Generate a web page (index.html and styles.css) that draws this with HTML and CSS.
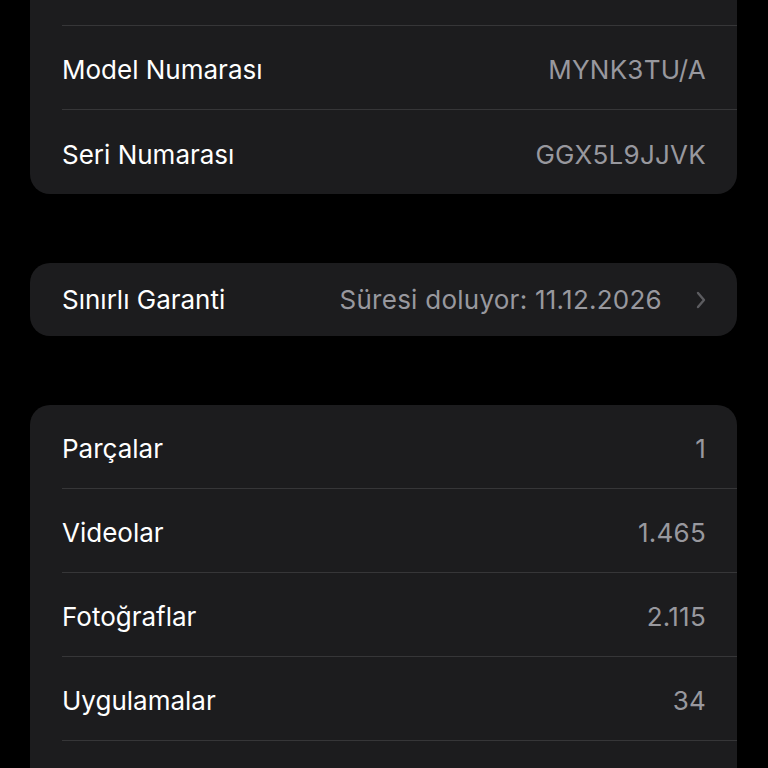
FILE: index.html
```html
<!DOCTYPE html>
<html lang="tr">
<head>
    <meta charset="UTF-8">
    <meta name="viewport" content="width=device-width, initial-scale=1.0">
    <title>Hakkında</title>
    <link rel="stylesheet" href="styles.css">
</head>
<body>
    <div class="screen">
        <div class="group group-first">
            <!-- row scrolled off the top, only its bottom edge shows -->
            <div class="row">
                <div class="row-inner"></div>
            </div>
            <div class="row">
                <div class="row-inner">
                    <span class="label">Model Numarası</span>
                    <span class="value">MYNK3TU/A</span>
                </div>
            </div>
            <div class="row">
                <div class="row-inner">
                    <span class="label">Seri Numarası</span>
                    <span class="value">GGX5L9JJVK</span>
                </div>
            </div>
        </div>

        <div class="group">
            <div class="row row-link">
                <div class="row-inner">
                    <span class="label">Sınırlı Garanti</span>
                    <span class="value">Süresi doluyor: 11.12.2026</span>
                    <svg class="chevron" viewBox="0 0 10 18" width="10" height="18">
                        <path d="M2 2 L8 9 L2 16" fill="none" stroke="currentColor" stroke-width="2.4" stroke-linecap="round" stroke-linejoin="round"/>
                    </svg>
                </div>
            </div>
        </div>

        <div class="group">
            <div class="row">
                <div class="row-inner">
                    <span class="label">Parçalar</span>
                    <span class="value">1</span>
                </div>
            </div>
            <div class="row">
                <div class="row-inner">
                    <span class="label">Videolar</span>
                    <span class="value">1.465</span>
                </div>
            </div>
            <div class="row">
                <div class="row-inner">
                    <span class="label">Fotoğraflar</span>
                    <span class="value">2.115</span>
                </div>
            </div>
            <div class="row">
                <div class="row-inner">
                    <span class="label">Uygulamalar</span>
                    <span class="value">34</span>
                </div>
            </div>
            <!-- next row starts below the fold -->
            <div class="row">
                <div class="row-inner"></div>
            </div>
        </div>
    </div>
</body>
</html>
```

FILE: styles.css
```css
* {
    box-sizing: border-box;
}

body {
    margin: 0;
    background-color: #000;
    font-family: 'Inter', 'Liberation Sans', sans-serif;
    color: #fff;
}

.screen {
    height: 768px;
    overflow: hidden;
}

.group {
    margin: 0 31px 69px 30px;
    background-color: #1c1c1e;
    border-radius: 20px;
    overflow: hidden;
}

/* first card is scrolled partly off the top */
.group-first {
    margin-top: -58px;
}

.row {
    padding-left: 32px;
}

.row-inner {
    display: flex;
    align-items: center;
    height: 84px;
    padding-top: 4px;
    padding-right: 31px;
    border-bottom: 1px solid #363638;
}

.row:last-child .row-inner {
    border-bottom: none;
}

.row-link .row-inner {
    height: 73px;
    padding-top: 0;
}

.label {
    flex: 1;
    font-size: 26px;
}

.value {
    font-size: 26px;
    color: #98989e;
    letter-spacing: 0.25px;
}

.chevron {
    margin-left: 34px;
    color: #5c5c60;
}
```
